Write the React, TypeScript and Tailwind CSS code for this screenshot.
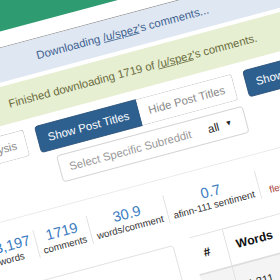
export default function App() {
  return (
    <div className="relative w-[280px] h-[280px] overflow-hidden bg-white">
      <div className="absolute left-[-200px] top-[-100px] w-[707px] h-[520px] origin-[340px_240px] rotate-[-15deg] scale-[0.81] bg-white font-['Liberation_Sans',Arial,sans-serif] text-[14px] text-[#333]">
        {/* navbar */}
        <div className="h-[66px] bg-[#2e9b70]" />
        <div className="h-[19px]" />

        <div className="border-t border-[#8c8c8c]">
          <div className="h-[41px] flex items-center justify-center bg-[#dfe7f3] text-[#3d5f8e]">
            Downloading&nbsp;<span className="underline">/u/spez</span>'s comments...
          </div>
          <div className="h-[47px] mt-[5px] flex items-center justify-center bg-[#e6efd2] text-[#6a6b3c]">
            Finished downloading 1719 of&nbsp;<span className="underline">/u/spez</span>'s comments.
          </div>
        </div>

        {/* toggle buttons */}
        <div className="flex justify-center gap-[14px] mt-[11px] pl-[14px]">
          <Toggle on="Show Analysis" off="Hide Analysis" active={false} />
          <Toggle on="Show Post Titles" off="Hide Post Titles" active />
          <Toggle on="Show Comments" off="Hide Comments" active />
        </div>

        {/* subreddit filter */}
        <div className="mt-[8px] mx-auto w-[238px] h-[34px] pl-[12px] pr-[16px] flex items-center border border-[#ccc] rounded bg-white">
          <span className="flex-1 text-[#999]">Select Specific Subreddit</span>
          <span className="text-[#222]">all</span>
          <span className="ml-[8px] text-[9px] text-[#222]">▼</span>
        </div>

        <div className="mt-[27px] border-t border-[#e5e5e5]" />

        {/* stats */}
        <div className="mt-[19px] flex justify-center">
          <Stat value="53,197" label="words" first />
          <Stat value="1719" label="comments" />
          <Stat value="30.9" label="words/comment" />
          <Stat value="0.7" label="afinn-111 sentiment" />
          <Stat value="8.4" label="flesch-kincaid grade" warn />
        </div>

        {/* bottom */}
        <div className="mt-[23px] flex justify-center items-start gap-[22px]">
          <div className="mt-[4px] w-[300px] h-[120px] border border-[#ddd] rounded bg-white" />
          <table className="w-[293px] border-collapse text-left">
            <thead>
              <tr className="border-t border-b-2 border-[#ddd]">
                <th className="w-[41px] px-3 pt-[11px] pb-[12px] font-bold text-[15px] text-[#111]">#</th>
                <th className="px-3 pt-[11px] pb-[12px] border-l border-[#ddd] font-bold text-[15px] text-[#111]">Words</th>
              </tr>
            </thead>
            <tbody>
              <tr className="bg-[#f4f4f4]">
                <td className="px-3 pt-[15px] pb-[10px]">1</td>
                <td className="px-3 pt-[15px] pb-[10px] border-l border-[#ddd]">4,311</td>
              </tr>
            </tbody>
          </table>
        </div>
      </div>
    </div>
  );
}

function Toggle({ on, off, active }: { on: string; off: string; active: boolean }) {
  return (
    <div className="flex">
      <button
        className={
          active
            ? "h-[34px] px-3 rounded-l bg-[#2d5f8f] border border-[#264f78] text-white whitespace-nowrap"
            : "h-[34px] px-3 rounded-l bg-white border border-[#ccc] text-[#888] whitespace-nowrap"
        }
      >
        {on}
      </button>
      <button className="h-[34px] px-3 rounded-r bg-white border border-l-0 border-[#ccc] text-[#888] whitespace-nowrap">
        {off}
      </button>
    </div>
  );
}

function Stat({ value, label, first, warn }: { value: string; label: string; first?: boolean; warn?: boolean }) {
  return (
    <div
      className={
        first
          ? "h-[36px] px-1.5 flex flex-col items-center justify-center"
          : warn
            ? "h-[36px] pl-[12px] pr-1.5 flex flex-col items-center justify-center border-l border-[#ddd]"
            : "h-[36px] px-1.5 flex flex-col items-center justify-center border-l border-[#ddd]"
      }
    >
      <span className={warn ? "text-[18px] leading-[19px] text-[#a94442]" : "text-[18px] leading-[19px] text-[#3a7bbf]"}>
        {value}
      </span>
      <span className={warn ? "text-[12px] leading-[14px] text-[#a94442]" : "text-[12px] leading-[14px] text-[#333]"}>
        {label}
      </span>
    </div>
  );
}
